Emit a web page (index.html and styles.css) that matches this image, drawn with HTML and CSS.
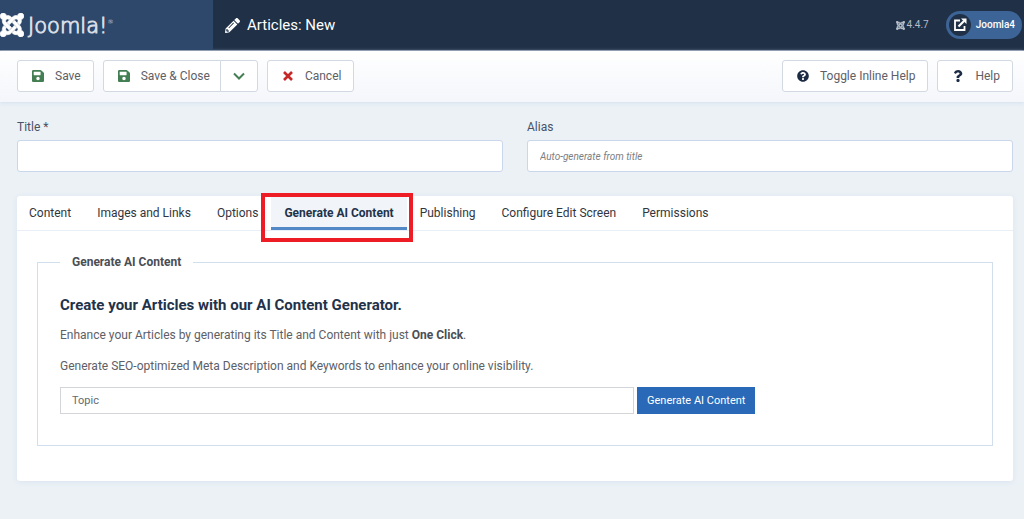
FILE: index.html
```html
<!DOCTYPE html>
<html lang="en">
<head>
<meta charset="utf-8">
<title>Articles: New</title>
<link rel="stylesheet" href="styles.css">
</head>
<body>
<svg class="sprite" aria-hidden="true">
  <symbol id="joomla" viewBox="0 32 448 448"><path d="M.6 92.1C.6 58.8 27.4 32 60.4 32c30 0 54.5 21.9 59.2 50.2 32.6-7.6 67.1.6 96.5 30l-44.3 44.3c-20.5-20.5-42.6-16.3-55.4-3.5-14.3 14.3-14.3 37.9 0 52.2l99.5 99.5-44 44.3c-87.7-87.2-49.7-49.7-99.8-99.7-26.8-26.5-35-64.8-24.8-98.9C20.4 144.6.6 120.7.6 92.1zm129.5 116.4l44.3 44.3c10-10 89.7-89.7 99.7-99.8 14.3-14.3 37.6-14.3 51.9 0 12.8 12.8 17 35-3.5 55.4l44 44.3c31.2-31.2 38.5-67.6 28.9-101.2 29.2-4.1 51.9-29.2 51.9-59.5 0-33.2-26.8-60.1-59.8-60.1-30.3 0-55.4 22.5-59.5 51.6-33.8-9.9-71.7-1.5-98.3 25.1-18.3 19.1-71.1 71.5-99.6 99.9zm266.3 152.2c8.2-32.7-.9-68.5-26.3-93.9-11.8-12.2 5 4.7-99.5-99.7l-44.3 44.3 99.7 99.7c14.3 14.3 14.3 37.6 0 51.9-12.8 12.8-35 17-55.4-3.5l-44 44.3c27.6 30.2 68 38.8 102.7 28 5.5 27.4 29.7 48.1 58.9 48.1 33 0 59.8-26.8 59.8-60.1 0-30.2-22.5-55-51.6-59.1zm-84.3-53.1l-44-44.3c-87 86.4-50.4 50.4-99.7 99.8-14.3 14.3-37.6 14.3-51.9 0-13.1-13.4-16.9-35.3 3.2-55.4l-44-44.3c-30.2 30.2-38 65.2-29.5 98.3-26.7 6-46.2 29.9-46.2 58.2C0 453.2 26.8 480 59.8 480c28.6 0 52.5-19.8 58.6-46.7 32.7 8.2 68.5-.6 94.2-26 32.1-32 12.2-12.4 99.5-99.7z"/></symbol>
  <symbol id="save" viewBox="0 32 448 448"><path d="M433.9 129.9l-83.9-83.9A48 48 0 0 0 316.1 32H48C21.5 32 0 53.5 0 80v352c0 26.5 21.5 48 48 48h352c26.5 0 48-21.5 48-48V163.9a48 48 0 0 0-14.1-34zM224 416c-35.3 0-64-28.7-64-64s28.7-64 64-64 64 28.700 64 64-28.700 64-64 64zm96-304.500V212c0 6.600-5.400 12-12 12H76c-6.600 0-12-5.400-12-12V108c0-6.600 5.400-12 12-12h228.500c3.200 0 6.200 1.300 8.500 3.500l3.500 3.500A12 12 0 0 1 320 111.500z"/></symbol>
</svg>
<header class="header">
  <a class="brand" href="#"><svg class="brand-mark" aria-hidden="true"><use href="#joomla"/></svg><span class="brand-name">Joomla!<sup>®</sup></span></a>
  <div class="header-main">
    <svg class="pencil" viewBox="0 0 512 512" aria-hidden="true"><path d="M497.900 142.100l-46.100 46.100c-4.700 4.700-12.300 4.700-17 0l-111-111c-4.700-4.700-4.700-12.300 0-17l46.100-46.100c18.700-18.700 49.100-18.700 67.900 0l60.100 60.100c18.800 18.700 18.800 49.100 0 67.900zM284.200 99.800L21.600 362.400.4 483.900c-2.900 16.400 11.400 30.600 27.800 27.800l121.500-21.300 262.600-262.600c4.700-4.700 4.700-12.300 0-17l-111-111c-4.800-4.700-12.400-4.700-17.100 0zM124.100 339.900c-5.500-5.500-5.500-14.300 0-19.800l154-154c5.500-5.500 14.300-5.500 19.800 0s5.500 14.300 0 19.800l-154 154c-5.500 5.500-14.300 5.500-19.800 0zM88 424h48v36.300l-64.500 11.300-31.100-31.100L51.700 376H88v48z"/></svg>
    <h1 class="page-title">Articles: New</h1>
    <span class="version"><svg aria-hidden="true"><use href="#joomla"/></svg>4.4.7</span>
    <a class="site-link" href="#"><span class="site-icon"><svg viewBox="0 0 14 14" aria-hidden="true"><path d="M7 2.500H2v9.500h9.500V8" fill="none" stroke="#fff" stroke-width="1.800"/><path d="M5.500 8.500L11 3" fill="none" stroke="#fff" stroke-width="2.200"/><path d="M8 .5h5.500V6z" fill="#fff"/></svg></span>Joomla4</a>
  </div>
</header>
<div class="toolbar">
  <button class="btn" type="button"><svg class="green" aria-hidden="true"><use href="#save"/></svg>Save</button>
  <div class="btn-group">
    <button class="btn" type="button"><svg class="green" aria-hidden="true"><use href="#save"/></svg>Save &amp; Close</button>
    <button class="btn btn-toggle" type="button" aria-label="More save options"><svg class="green" viewBox="0 0 12 12" aria-hidden="true"><path d="M1 3.500L6 8.500l5-5" fill="none" stroke="currentColor" stroke-width="2"/></svg></button>
  </div>
  <button class="btn" type="button"><svg class="red" viewBox="0 0 12 12" aria-hidden="true"><path d="M2 2l8 8M10 2l-8 8" stroke="currentColor" stroke-width="2.600"/></svg>Cancel</button>
  <div class="toolbar-end">
    <button class="btn" type="button"><svg class="navy" viewBox="0 0 512 512" aria-hidden="true"><path d="M504 256c0 137-111 248-248 248S8 393 8 256C8 119.100 119 8 256 8s248 111.100 248 248zM262.700 90c-54.500 0-89.300 23-116.500 63.800-3.500 5.300-2.400 12.400 2.700 16.300l34.700 26.300c5.200 3.900 12.600 3 16.700-2.100 17.900-22.700 30.100-35.800 57.300-35.800 20.400 0 45.700 13.100 45.700 33 0 15-12.400 22.700-32.500 34C247.100 238.500 216 255 216 296v4c0 6.600 5.400 12 12 12h56c6.600 0 12-5.400 12-12v-1.300c0-28.700 83.800-29.900 83.800-107.500C379.700 132.800 319.100 90 262.700 90zM256 338c-25.400 0-46 20.600-46 46s20.600 46 46 46 46-20.600 46-46-20.600-46-46-46z"/></svg>Toggle Inline Help</button>
    <button class="btn" type="button"><svg class="navy" viewBox="0 0 384 512" aria-hidden="true"><path d="M202 0C122.500 0 69.700 32.700 28.300 91c-7.500 10.600-5.200 25.200 5.100 33l43.100 32.700c10.400 7.900 25.100 6.100 33.300-4.100 25-31.400 43.600-49.400 82.800-49.400 30.800 0 68.800 19.800 68.800 49.600 0 22.600-18.600 34.100-49 51.200-35.400 19.900-82.300 44.600-82.300 106.400V320c0 13.300 10.700 24 24 24h72.500c13.300 0 24-10.700 24-24v-5.800c0-42.900 125.300-44.600 125.300-160.600C375.800 66.300 285.300 0 202 0zM192.500 373.500c-38.200 0-69.300 31.100-69.300 69.300S154.300 512 192.500 512s69.300-31.100 69.300-69.300-31.100-69.200-69.300-69.200z"/></svg>Help</button>
  </div>
</div>
<main class="content">
  <div class="title-row">
    <div class="field"><label for="title">Title *</label><input id="title" type="text"></div>
    <div class="field"><label for="alias">Alias</label><input id="alias" type="text" placeholder="Auto-generate from title"></div>
  </div>
  <section class="card">
    <div class="tabs" role="tablist">
      <button class="tab" type="button" role="tab">Content</button>
      <button class="tab" type="button" role="tab">Images and Links</button>
      <button class="tab" type="button" role="tab">Options</button>
      <button class="tab tab-active" type="button" role="tab" aria-selected="true">Generate AI Content<span class="highlight"></span></button>
      <button class="tab" type="button" role="tab">Publishing</button>
      <button class="tab" type="button" role="tab">Configure Edit Screen</button>
      <button class="tab" type="button" role="tab">Permissions</button>
    </div>
    <fieldset class="panel">
      <legend>Generate AI Content</legend>
      <h2>Create your Articles with our AI Content Generator.</h2>
      <p>Enhance your Articles by generating its Title and Content with just <strong>One Click</strong>.</p>
      <p>Generate SEO-optimized Meta Description and Keywords to enhance your online visibility.</p>
      <div class="generate">
        <input type="text" placeholder="Topic" aria-label="Topic">
        <button type="button">Generate AI Content</button>
      </div>
    </fieldset>
  </section>
</main>
</body>
</html>
```
FILE: styles.css
```css
* { box-sizing: border-box; }
body {
  margin: 0;
  background: #ebf1f5;
  color: #5d6066;
  font: 12px/18px Roboto, "Liberation Sans", sans-serif;
}
button, input { font: inherit; color: inherit; }
svg { fill: currentColor; flex: none; }
.sprite { display: none; }

.header {
  display: flex;
  height: 51px;
  background: #203047;
  color: #fff;
  border-bottom: 1px solid #7e8ba0;
}
.brand {
  display: flex;
  align-items: center;
  gap: 4px;
  width: 213px;
  background: #2e486b;
  color: #fff;
  text-decoration: none;
}
.brand-mark { width: 24px; height: 24px; stroke: currentColor; stroke-width: 12px; }
.brand-name { padding-top: 2px; font: 200 21px/24px "DejaVu Sans", sans-serif; -webkit-text-stroke: 1px #d5dce5; }
.brand-name sup { font-size: 6px; line-height: 6px; vertical-align: 9px; -webkit-text-stroke: 0; }
.header-main {
  display: flex;
  flex: 1;
  align-items: center;
  padding: 0 2px 0 12px;
}
.pencil { width: 15px; height: 15px; margin-right: 7px; }
.page-title { flex: 1; margin: 0; font-size: 15px; line-height: 20px; font-weight: 400; }
.version {
  display: flex;
  align-items: center;
  gap: 2px;
  margin-right: 17px;
  color: #b4bdc9;
  font-size: 10px;
}
.version svg { width: 9px; height: 9px; stroke: currentColor; stroke-width: 16px; }
.site-link {
  display: flex;
  align-items: center;
  gap: 5px;
  height: 28px;
  padding: 0 7px 0 3px;
  border-radius: 14px;
  background: #3d6496;
  color: #fff;
  font-size: 10px;
  font-weight: 500;
  text-decoration: none;
}
.site-icon {
  display: flex;
  align-items: center;
  justify-content: center;
  width: 22px;
  height: 22px;
  border-radius: 50%;
  background: #203047;
}
.site-icon svg { width: 14px; height: 14px; }

.toolbar {
  display: flex;
  gap: 9px;
  height: 51px;
  padding: 9px 11px 10px 17px;
  background: linear-gradient(#fff, #f4f6fb);
  box-shadow: 0 1px 4px #d5dff0;
}
.toolbar-end { display: flex; gap: 9px; margin-left: auto; }
.btn {
  display: flex;
  align-items: center;
  gap: 11px;
  height: 32px;
  padding: 0 12px 0 14px;
  border: 1px solid #d3d9e1;
  border-radius: 3px;
  background: #fff;
}
.btn svg { width: 12px; height: 12px; }
.btn-group { display: flex; }
.btn-group .btn:first-child { border-radius: 3px 0 0 3px; padding-right: 10px; }
.btn-group .btn-toggle { margin-left: -1px; padding: 0 12px; border-radius: 0 3px 3px 0; }
.green { color: #437f53; }
.red { color: #c52827; }
.navy { color: #1d2c45; }

.content { padding: 16px 11px 38px 17px; }
.title-row { display: grid; grid-template-columns: 1fr 1fr; gap: 24px; }
.field label { display: block; margin-bottom: 4px; color: #495267; }
.field input {
  display: block;
  width: 100%;
  height: 32px;
  padding: 0 12px;
  border: 1px solid #c9d6eb;
  border-radius: 3px;
  background: #fff;
}
.field input::placeholder { color: #7b7e83; font-size: 10px; font-style: italic; }
.card {
  margin-top: 24px;
  padding-bottom: 35px;
  border-radius: 3px;
  background: #fff;
  box-shadow: 0 1px 5px #dae3f1;
}
.tabs { display: flex; border-bottom: 1px solid #e9eff6; }
.tab {
  position: relative;
  height: 34px;
  padding: 0 13px;
  border: 0;
  background: none;
  color: #31363e;
}
.tab:first-child { padding-left: 12px; }
.tab-active {
  background: #f1f5f9;
  box-shadow: inset 0 -3px #5288c6;
  color: #22324a;
  font-weight: 700;
}
.highlight {
  position: absolute;
  inset: -3px -6px -12px -10px;
  border: 4px solid #ee1c25;
  z-index: 1;
}
.panel {
  margin: 22px 20px 0;
  padding: 23px 22px 31px;
  border: 1px solid #d1deeb;
}
.panel legend { padding: 0 12px; color: #4a4e55; font-weight: 700; }
.panel h2 { margin: 0 0 10px; color: #22324a; font-size: 15px; line-height: 22px; font-weight: 700; }
.panel p { margin: 0 0 13px; }
.panel p + p { margin-bottom: 12px; }
.panel strong { color: #4a4e55; }
.generate { display: flex; gap: 3px; }
.generate input {
  flex: 0 1 574px;
  min-width: 0;
  height: 27px;
  padding: 0 11px;
  border: 1px solid #d3d5d8;
  background: #fff;
  font-size: 11px;
}
.generate input::placeholder { color: #66696f; }
.generate button {
  height: 27px;
  padding: 0 10px;
  border: 0;
  background: #2a69b8;
  color: #fff;
  font-size: 11px;
}
```
